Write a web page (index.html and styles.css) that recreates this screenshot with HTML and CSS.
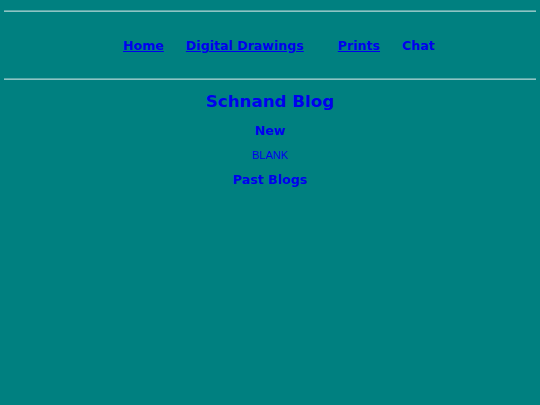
FILE: index.html
```html
<!DOCTYPE html>
<html>
<head>
<meta charset="utf-8">
<title>Schnand Blog</title>
<link rel="stylesheet" href="styles.css">
</head>
<body>
<div class="page">
  <hr class="rule">
  <nav class="nav">
    <a class="nav-link" href="#">Home</a>
    <a class="nav-link wide" href="#">Digital Drawings</a>
    <a class="nav-link" href="#">Prints</a>
    <span class="nav-text">Chat</span>
  </nav>
  <hr class="rule">
  <main class="content">
    <h1 class="title">Schnand Blog</h1>
    <h2 class="section">New</h2>
    <p class="blank">BLANK</p>
    <h2 class="section">Past Blogs</h2>
  </main>
</div>
</body>
</html>
```
FILE: styles.css
```css
html, body {
  margin: 0;
  padding: 0;
  background: #008080;
}
.page {
  padding: 10px 4px 0 4px;
  font-family: "DejaVu Sans", sans-serif;
}
.rule {
  margin: 0;
  height: 0;
  border: none;
  border-top: 1px solid #5aa9a9;
  border-bottom: 1px solid #8cc4c4;
}
.nav {
  display: flex;
  align-items: center;
  padding: 26px 0 24px 119px;
  line-height: 16px;
  font-size: 12.6px;
  font-weight: bold;
}
.nav-link {
  color: #0000ee;
  text-decoration: underline;
  margin-right: 22px;
}
.nav-link.wide {
  margin-right: 34px;
}
.nav-text {
  color: #0000ee;
}
.content {
  display: flex;
  flex-direction: column;
  align-items: center;
  color: #0000ee;
}
.title {
  margin: 10px 0 0 0;
  font-size: 16.7px;
  line-height: 22px;
  font-weight: bold;
}
.section {
  margin: 11px 0 0 0;
  font-size: 12.6px;
  line-height: 16px;
  font-weight: bold;
}
.blank {
  margin: 9px 0 0 0;
  font-family: "Liberation Sans", Arial, sans-serif;
  font-size: 11px;
  line-height: 14px;
}
.blank + .section {
  margin-top: 10px;
}
```
